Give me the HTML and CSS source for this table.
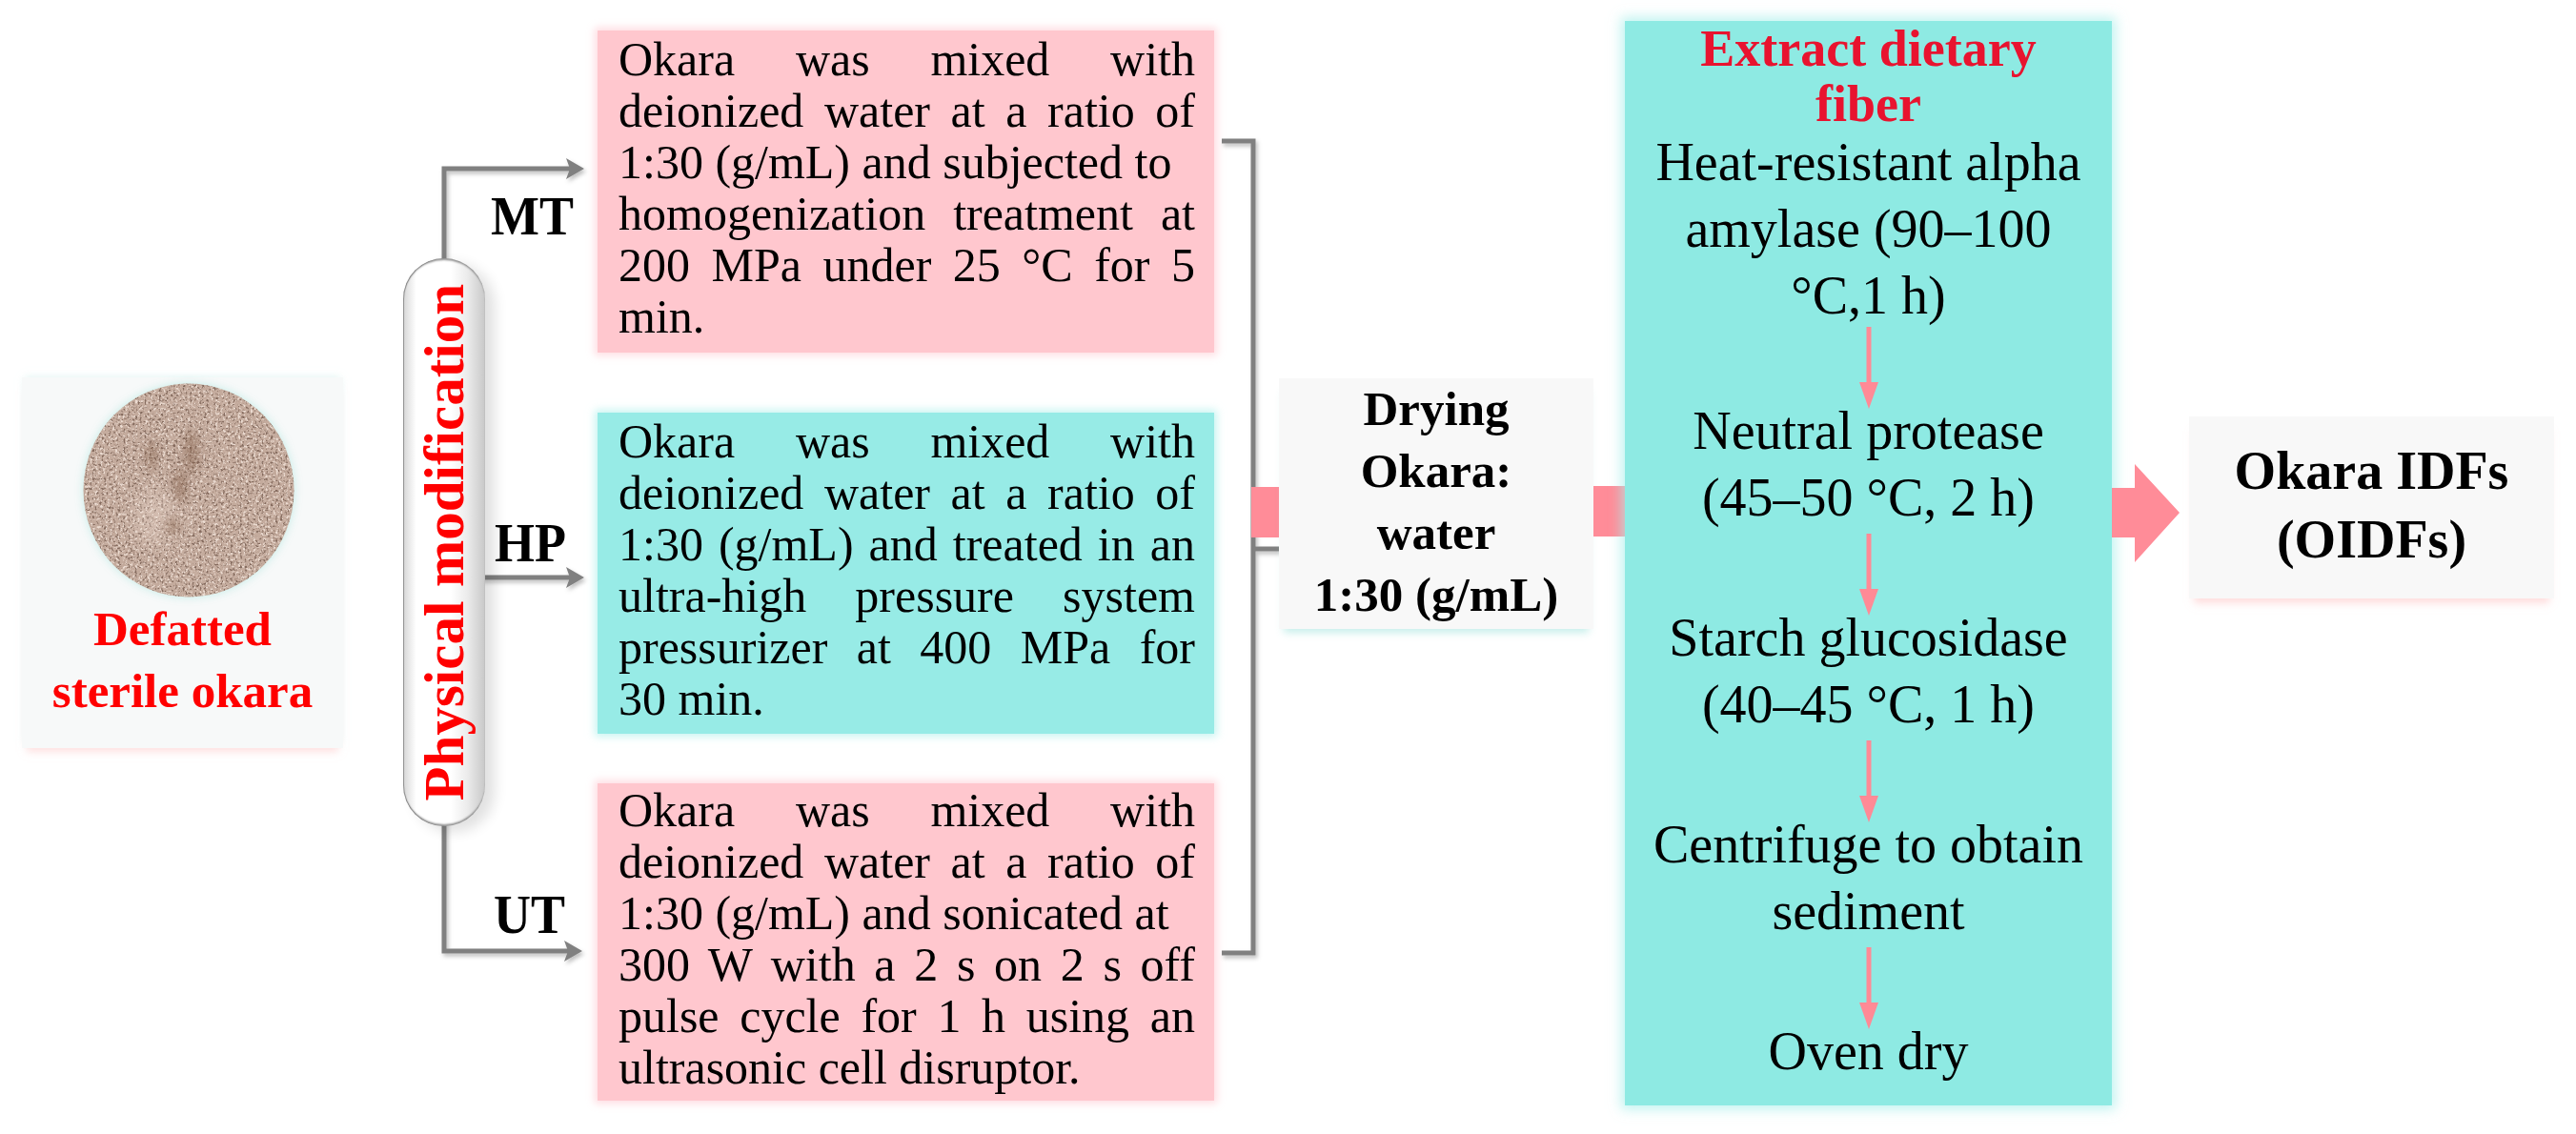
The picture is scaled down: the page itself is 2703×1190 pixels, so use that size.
FILE: index.html
```html
<!DOCTYPE html>
<html lang="en">
<head>
<meta charset="utf-8">
<title>Okara IDF preparation</title>
<link rel="stylesheet" href="styles.css">
</head>
<body>
<main class="diagram">

  <section class="source">
    <svg class="okara-photo" width="222" height="225" viewBox="0 0 222 225" role="img" aria-label="okara powder">
      <defs>
        <clipPath id="disc"><ellipse cx="111" cy="112.5" rx="110.5" ry="112"/></clipPath>
        <filter id="lightgrain" x="0" y="0" width="100%" height="100%" color-interpolation-filters="sRGB">
          <feTurbulence type="fractalNoise" baseFrequency="0.38" numOctaves="2" seed="3"/>
          <feColorMatrix type="matrix" values="0 0 0 0 0.92  0 0 0 0 0.86  0 0 0 0 0.82  5 0 0 0 -2.6"/>
        </filter>
        <filter id="darkgrain" x="0" y="0" width="100%" height="100%" color-interpolation-filters="sRGB">
          <feTurbulence type="fractalNoise" baseFrequency="0.4" numOctaves="2" seed="17"/>
          <feColorMatrix type="matrix" values="0 0 0 0 0.52  0 0 0 0 0.42  0 0 0 0 0.37  5 0 0 0 -2.7"/>
        </filter>
        <filter id="soft" x="-60%" y="-60%" width="220%" height="220%"><feGaussianBlur stdDeviation="4"/></filter>
        <filter id="soft2" x="-60%" y="-60%" width="220%" height="220%"><feGaussianBlur stdDeviation="9"/></filter>
      </defs>
      <g clip-path="url(#disc)">
        <rect width="222" height="225" fill="#c4ab9d"/>
        <rect width="222" height="225" filter="url(#lightgrain)"/>
        <rect width="222" height="225" filter="url(#darkgrain)"/>
        <ellipse cx="78" cy="140" rx="26" ry="30" fill="#f1e0d6" opacity="0.3" filter="url(#soft2)"/>
        <g filter="url(#soft)" fill="#7d5842" opacity="0.4">
          <ellipse cx="114" cy="72" rx="8" ry="22"/>
          <ellipse cx="102" cy="108" rx="8" ry="18"/>
          <ellipse cx="94" cy="150" rx="8" ry="10"/>
          <ellipse cx="72" cy="76" rx="6" ry="16"/>
        </g>
      </g>
    </svg>
    <p class="source-name">Defatted<br>sterile okara</p>
  </section>

  <section class="branch">
    <svg class="wires" width="267" height="1190" viewBox="0 0 267 1190" aria-hidden="true">
      <defs>
        <filter id="sh1" x="-20%" y="-20%" width="140%" height="140%">
          <feDropShadow dx="2" dy="3" stdDeviation="2" flood-color="#000" flood-opacity="0.25"/>
        </filter>
      </defs>
      <g filter="url(#sh1)">
        <g stroke="#808080" stroke-width="5" fill="none" stroke-linejoin="miter">
          <path d="M106 300 V177 H238"/>
          <path d="M140 606 H238"/>
          <path d="M106 840 V998 H236"/>
        </g>
        <g fill="#808080">
          <polygon points="234,166 253,177 234,188 238,177"/>
          <polygon points="234,595 253,606 234,617 238,606"/>
          <polygon points="232,987 251,998 232,1009 236,998"/>
        </g>
      </g>
    </svg>
    <div class="capsule"><span class="capsule-text">Physical modification</span></div>
    <p class="tag tag-mt">MT</p>
    <p class="tag tag-hp">HP</p>
    <p class="tag tag-ut">UT</p>
  </section>

  <section class="methods">
    <div class="method method-mt pink">
      <p class="ln j">Okara was mixed with</p>
      <p class="ln j">deionized water at a ratio of</p>
      <p class="ln">1:30 (g/mL) and subjected to</p>
      <p class="ln j">homogenization treatment at</p>
      <p class="ln j">200 MPa under 25 °C for 5</p>
      <p class="ln">min.</p>
    </div>
    <div class="method method-hp teal">
      <p class="ln j">Okara was mixed with</p>
      <p class="ln j">deionized water at a ratio of</p>
      <p class="ln j">1:30 (g/mL) and treated in an</p>
      <p class="ln j">ultra-high pressure system</p>
      <p class="ln j">pressurizer at 400 MPa for</p>
      <p class="ln">30 min.</p>
    </div>
    <div class="method method-ut pink">
      <p class="ln j">Okara was mixed with</p>
      <p class="ln j">deionized water at a ratio of</p>
      <p class="ln">1:30 (g/mL) and sonicated at</p>
      <p class="ln j">300 W with a 2 s on 2 s off</p>
      <p class="ln j">pulse cycle for 1 h using an</p>
      <p class="ln">ultrasonic cell disruptor.</p>
    </div>
  </section>

  <section class="join">
    <svg width="68" height="1190" viewBox="0 0 68 1190" aria-hidden="true">
      <defs>
        <filter id="sh2" x="-50%" y="-5%" width="200%" height="110%">
          <feDropShadow dx="2" dy="3" stdDeviation="2" flood-color="#000" flood-opacity="0.25"/>
        </filter>
      </defs>
      <g filter="url(#sh2)" stroke="#808080" stroke-width="5" fill="none" stroke-linejoin="miter">
        <path d="M8 148 H41 V1000 H8"/>
        <path d="M41 576 H68"/>
      </g>
      <rect x="39" y="511" width="29" height="53" fill="#ff8c98"/>
    </svg>
  </section>

  <section class="drying">Drying<br>Okara:<br>water<br>1:30 (g/mL)</section>

  <div class="stub"></div>

  <section class="extract">
    <h2 class="extract-title">Extract dietary<br>fiber</h2>
    <p class="step">Heat-resistant alpha<br>amylase (90–100<br>°C,1 h)</p>
    <svg class="down down-first" width="30" height="86" viewBox="0 0 30 86" aria-hidden="true"><path d="M15 0 V62" stroke="#ff8a96" stroke-width="5"/><polygon points="5,58 25,58 15,86" fill="#ff8a96"/></svg>
    <p class="step">Neutral protease<br>(45–50 °C, 2 h)</p>
    <svg class="down" width="30" height="86" viewBox="0 0 30 86" aria-hidden="true"><path d="M15 0 V62" stroke="#ff8a96" stroke-width="5"/><polygon points="5,58 25,58 15,86" fill="#ff8a96"/></svg>
    <p class="step">Starch glucosidase<br>(40–45 °C, 1 h)</p>
    <svg class="down" width="30" height="86" viewBox="0 0 30 86" aria-hidden="true"><path d="M15 0 V62" stroke="#ff8a96" stroke-width="5"/><polygon points="5,58 25,58 15,86" fill="#ff8a96"/></svg>
    <p class="step">Centrifuge to obtain<br>sediment</p>
    <svg class="down" width="30" height="86" viewBox="0 0 30 86" aria-hidden="true"><path d="M15 0 V62" stroke="#ff8a96" stroke-width="5"/><polygon points="5,58 25,58 15,86" fill="#ff8a96"/></svg>
    <p class="step">Oven dry</p>
  </section>

  <div class="fat-arrow">
    <svg width="81" height="103" viewBox="0 0 81 103" aria-hidden="true">
      <polygon points="0,25 24,25 24,0 71,51 24,103 24,77 0,77" fill="#ff8c98"/>
    </svg>
  </div>

  <section class="result">Okara IDFs<br>(OIDFs)</section>

</main>
</body>
</html>
```

FILE: styles.css
```css
* { box-sizing: border-box; }

html, body {
  margin: 0;
  padding: 0;
  background: #ffffff;
}

body {
  font-family: "Liberation Serif", "Times New Roman", serif;
  color: #000;
}

.diagram {
  display: flex;
  align-items: flex-start;
  width: 2703px;
  height: 1190px;
  padding-left: 23px;
  overflow: hidden;
}

/* ---------- source ---------- */
.source {
  flex: none;
  width: 337px;
  height: 389px;
  margin-top: 396px;
  padding-top: 6px;
  background: #f7f9f9;
  box-shadow: 0 9px 8px -5px rgba(255, 200, 200, 0.55), 0 -3px 8px -3px rgba(200, 236, 232, 0.6);
  display: flex;
  flex-direction: column;
  align-items: center;
}

.okara-photo {
  display: block;
  margin-left: 12px;
  filter: drop-shadow(0 0 5px rgba(190, 234, 228, 0.9));
}

.source-name {
  margin: 1px 0 0;
  font-weight: bold;
  font-size: 51px;
  line-height: 65px;
  color: #ff0000;
  text-align: center;
  white-space: nowrap;
}

/* ---------- branch ---------- */
.branch {
  flex: none;
  position: relative;
  width: 267px;
  height: 1190px;
}

.wires { display: block; }

.capsule {
  position: absolute;
  left: 63px;
  top: 271px;
  width: 86px;
  height: 596px;
  border-radius: 43px;
  background: linear-gradient(90deg, #d6d6d6 0%, #ffffff 16%, #ffffff 58%, #ececec 78%, #c8c8c8 100%);
  box-shadow:
    inset 0 3px 2px -1px rgba(0, 0, 0, 0.4),
    inset 0 -3px 2px -1px rgba(0, 0, 0, 0.4),
    inset 1px 0 1px rgba(0, 0, 0, 0.3),
    10px 6px 14px rgba(0, 0, 0, 0.12);
  display: flex;
  align-items: center;
  justify-content: center;
}

.capsule-text {
  writing-mode: vertical-rl;
  transform: rotate(180deg);
  font-weight: bold;
  font-size: 59px;
  line-height: 70px;
  color: #ff0000;
  white-space: nowrap;
}

.tag {
  position: absolute;
  margin: 0;
  font-weight: bold;
  font-size: 54px;
  line-height: 54px;
  transform: scaleY(1.06);
}
.tag-mt { left: 155px; top: 200px; }
.tag-hp { left: 159px; top: 543px; }
.tag-ut { left: 158px; top: 933px; }

/* ---------- methods ---------- */
.methods {
  flex: none;
  width: 647px;
  display: flex;
  flex-direction: column;
}

.method {
  height: 338px;
  padding: 3px 20px 0 22px;
  font-size: 50px;
  line-height: 54px;
}
.method-mt { margin-top: 32px; }
.method-hp { margin-top: 63px; height: 337px; }
.method-ut { margin-top: 52px; height: 333px; padding-top: 1px; }

.pink {
  background: #ffc7ce;
  box-shadow: 0 0 8px 3px rgba(255, 205, 212, 0.7);
}
.teal {
  background: #97ebe6;
  box-shadow: 0 0 8px 3px rgba(165, 238, 233, 0.6);
}

.ln {
  margin: 0;
  white-space: nowrap;
}
.ln.j {
  text-align: justify;
  text-align-last: justify;
}

/* ---------- join ---------- */
.join {
  flex: none;
  width: 68px;
}
.join svg { display: block; }

/* ---------- drying ---------- */
.drying {
  flex: none;
  width: 330px;
  height: 263px;
  margin-top: 397px;
  background: #f8f8f8;
  box-shadow: 0 9px 8px -5px rgba(130, 220, 210, 0.45);
  text-align: center;
  font-weight: bold;
  font-size: 51px;
  line-height: 65px;
}

.stub {
  flex: none;
  width: 33px;
  height: 53px;
  margin-top: 510px;
  background: #ff8c98;
}

/* ---------- extract ---------- */
.extract {
  flex: none;
  width: 511px;
  height: 1138px;
  margin-top: 22px;
  padding-top: 0;
  background: #8eeae3;
  box-shadow: 0 0 12px 4px rgba(165, 238, 233, 0.7);
  display: flex;
  flex-direction: column;
  align-items: center;
}

.extract-title {
  margin: 0 0 -3px;
  color: #e8132f;
  font-weight: bold;
  font-size: 54px;
  line-height: 58px;
  text-align: center;
  white-space: nowrap;
}

.step {
  margin: 0;
  font-size: 56px;
  line-height: 70px;
  text-align: center;
  white-space: nowrap;
}

.down {
  display: block;
  flex: none;
  margin: 3px 0 -12px;
}
.down-first { margin-top: -2px; }

/* ---------- result ---------- */
.fat-arrow {
  flex: none;
  width: 81px;
  margin-top: 487px;
}
.fat-arrow svg { display: block; }

.result {
  flex: none;
  width: 383px;
  height: 191px;
  margin-top: 437px;
  padding-top: 21px;
  background: #f8f8f8;
  box-shadow: 0 10px 8px -5px rgba(255, 190, 190, 0.5);
  text-align: center;
  font-weight: bold;
  font-size: 56px;
  line-height: 72px;
}
```
